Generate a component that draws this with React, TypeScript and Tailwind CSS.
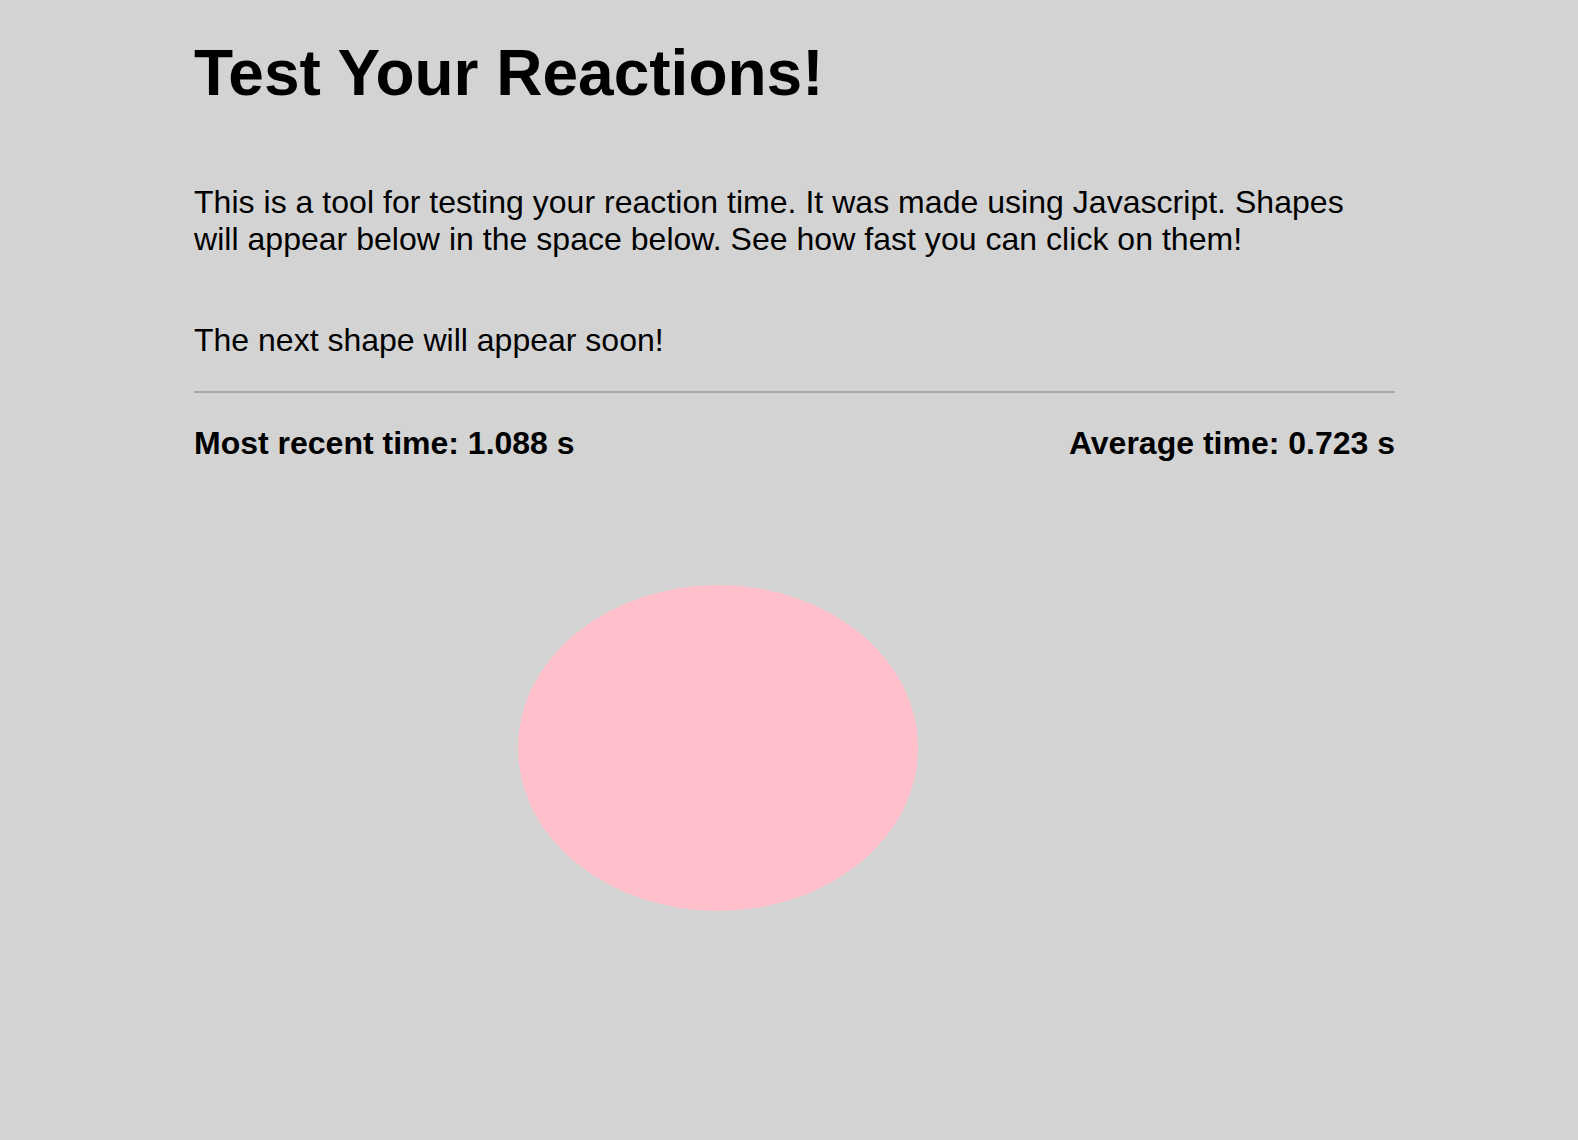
export default function App() {
  return (
    <div
      className="min-h-[1140px] w-full bg-[#d3d3d3] text-black"
      style={{ fontFamily: '"Liberation Sans", Arial, sans-serif' }}
    >
      <div className="ml-[194px] flex w-[1201px] flex-col pt-[37px]">
        <h1 className="text-[64px] font-bold leading-[1.15]">Test Your Reactions!</h1>
        <p className="mt-[73px] text-[32px] leading-[1.16] tracking-[0.03px]">
          This is a tool for testing your reaction time. It was made using Javascript. Shapes will appear below in the space below. See how fast you can click on them!
        </p>
        <p className="mt-[64px] text-[32px] leading-[1.15]">The next shape will appear soon!</p>
        <div className="mt-[32px] h-[2px] w-full bg-[#a9a9a9]" />
        <div className="mt-[32px] flex justify-between text-[32px] font-bold leading-[1.15]">
          <span>Most recent time: 1.088 s</span>
          <span>Average time: 0.723 s</span>
        </div>
        <div className="relative h-[600px]">
          <div className="absolute left-[324px] top-[124px] h-[326px] w-[400px] rounded-[50%] bg-[#ffc0cb]" />
        </div>
      </div>
    </div>
  );
}
